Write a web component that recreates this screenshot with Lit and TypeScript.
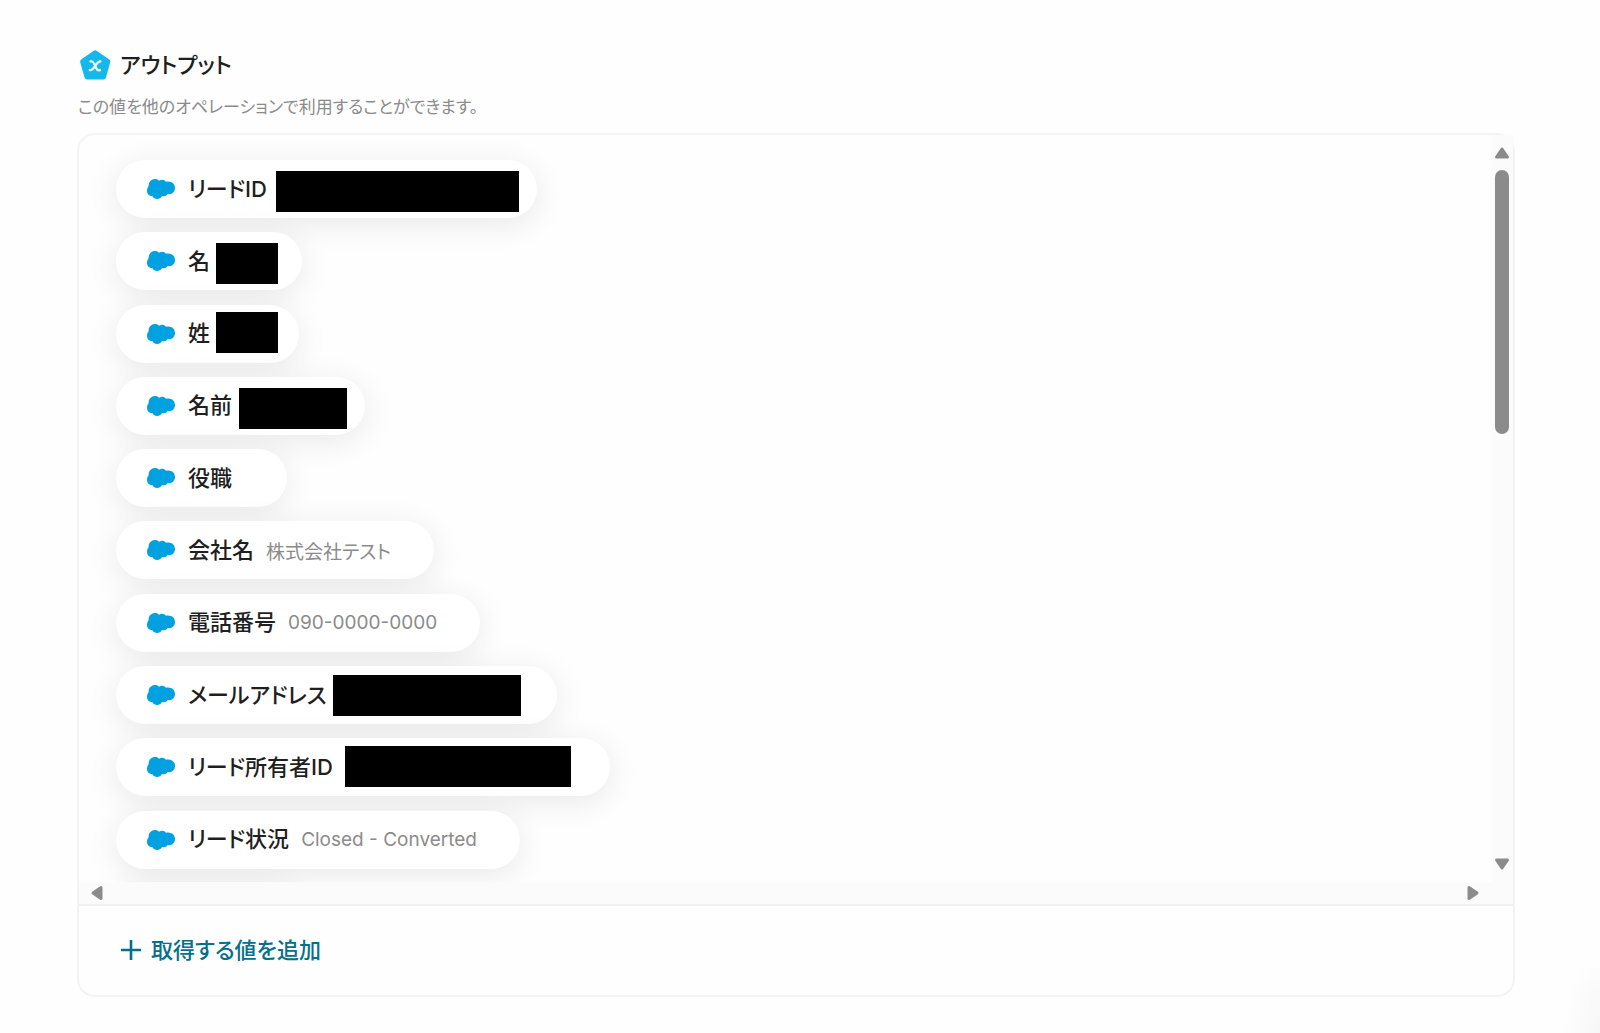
import { LitElement, html, css, svg, nothing } from "lit";
import { customElement, property } from "lit/decorators.js";
import { styleMap } from "lit/directives/style-map.js";

interface Mask {
  slot: number;
  left: number;
  top: number;
  width: number;
}

interface OutputField {
  label: string;
  value?: string;
  mask?: Mask;
}

const FIELDS: OutputField[] = [
  { label: "リードID", mask: { slot: 215, left: -3, top: 11, width: 243 } },
  { label: "名", mask: { slot: 37, left: -6, top: 11, width: 62 } },
  { label: "姓", mask: { slot: 34, left: -6, top: 7, width: 62 } },
  { label: "名前", mask: { slot: 78, left: -5, top: 11, width: 108 } },
  { label: "役職", value: "" },
  { label: "会社名", value: "株式会社テスト" },
  { label: "電話番号", value: "090-0000-0000" },
  { label: "メールアドレス", mask: { slot: 175, left: -6, top: 9, width: 188 } },
  { label: "リード所有者ID", mask: { slot: 222, left: 0, top: 8, width: 226 } },
  { label: "リード状況", value: "Closed - Converted" },
];

@customElement("output-pill")
export class OutputPill extends LitElement {
  @property({ attribute: false }) field!: OutputField;

  static styles = css`
    :host {
      position: relative;
      display: flex;
      align-items: center;
      box-sizing: border-box;
      width: fit-content;
      height: 58px;
      padding: 0 43px 0 31px;
      border-radius: 29px;
      background: #fff;
      box-shadow: 0 6px 32px rgba(0, 0, 0, 0.09);
      white-space: nowrap;
    }
    .cloud {
      flex: none;
      width: 28px;
      height: 20px;
      margin-right: 13px;
      fill: #00a1e0;
    }
    .label {
      padding-bottom: 1px;
      font-size: 22px;
      line-height: 32px;
      font-weight: 500;
      color: #1f1f1f;
    }
    .value {
      margin-left: 12px;
      font-size: 19px;
      color: #8b8b8b;
    }
    .slot {
      position: relative;
      align-self: stretch;
    }
    .mask {
      position: absolute;
      height: 41px;
      background: #000;
    }
  `;

  render() {
    const { label, value, mask } = this.field;
    return html`
      <svg class="cloud" viewBox="0 0 84 60" aria-hidden="true">
        <path
          d="M5 22 C4 9 13 0 24 0 C30 0 33 2 36 5 C44 0 53 2 57 8 C73 5 84 14 84 27 C84 40 73 48 62 45 C58 51 52 53 45 51 C41 58 36 60 31 60 C23 60 18 56 16 51 C6 52 0 44 0 36 C0 30 2 25 5 22 Z"
        />
      </svg>
      <span class="label">${label}</span>
      ${mask
        ? html`<span class="value slot" style=${styleMap({ width: `${mask.slot}px` })}>
            <span
              class="mask"
              style=${styleMap({ left: `${mask.left}px`, top: `${mask.top}px`, width: `${mask.width}px` })}
            ></span>
          </span>`
        : value !== undefined
          ? html`<span class="value">${value}</span>`
          : nothing}
    `;
  }
}

const arrow = (turn: number) => html`
  <svg class="arrow" viewBox="0 0 16 16" aria-hidden="true">
    ${svg`<path transform="rotate(${turn} 8 8)" d="M8 4 L13.500 12 H2.500 Z" />`}
  </svg>
`;

@customElement("app-root")
export class AppRoot extends LitElement {
  static styles = css`
    :host {
      display: flex;
      flex-direction: column;
      box-sizing: border-box;
      height: 100vh;
      padding: 48px 85px 36px 77px;
      background: radial-gradient(ellipse 36px 76px at 100% 100%, #f6f6f6 0, #fefefe 100%);
      background-color: #fefefe;
      font-family: Inter, "Noto Sans CJK JP", sans-serif;
      font-feature-settings: "palt";
    }
    .heading {
      display: flex;
      align-items: center;
      gap: 9px;
      height: 34px;
      padding-left: 2px;
    }
    .badge {
      width: 32px;
      height: 32px;
    }
    .title {
      margin: 0;
      font-size: 22px;
      line-height: 32px;
      font-weight: 500;
      color: #1f1f1f;
    }
    .note {
      margin: 13px 0;
      padding-left: 1px;
      font-size: 17px;
      line-height: 25px;
      color: #8b8b8b;
    }
    .card {
      flex: 1;
      min-height: 0;
      display: flex;
      flex-direction: column;
      border: 2px solid #f3f3f3;
      border-radius: 18px;
    }
    .scroller {
      flex: 1;
      min-height: 0;
      display: grid;
      grid-template: minmax(0, 1fr) 22px / minmax(0, 1fr) 22px;
      border-bottom: 2px solid #f1f1f1;
    }
    .viewport {
      overflow: hidden;
      padding: 25px 37px 0;
      border-top-left-radius: 16px;
    }
    .list {
      display: flex;
      flex-direction: column;
      justify-content: space-between;
      height: 781px;
      margin: 0;
      padding: 0;
      list-style: none;
    }
    .next {
      width: 184px;
      height: 58px;
      border-radius: 29px;
      background: #fff;
      box-shadow: 0 6px 32px rgba(0, 0, 0, 0.09);
    }
    .track {
      display: flex;
      align-items: center;
      background: #fbfbfb;
    }
    .vertical {
      flex-direction: column;
      padding: 10px 0;
    }
    .horizontal {
      justify-content: space-between;
      padding: 0 10px;
    }
    .corner {
      background: #fbfbfb;
    }
    .arrow {
      flex: none;
      width: 16px;
      height: 16px;
      fill: #8b8b8b;
      stroke: #8b8b8b;
      stroke-width: 3;
      stroke-linejoin: round;
    }
    .rail {
      flex: 1;
      padding-top: 9px;
    }
    .thumb {
      width: 14px;
      height: 264px;
      border-radius: 7px;
      background: #8b8b8b;
    }
    .footer {
      display: flex;
      align-items: center;
      height: 89px;
      padding: 0 41px;
    }
    .add {
      display: flex;
      align-items: center;
      gap: 9px;
      padding: 0 0 2px;
      border: 0;
      background: none;
      font: inherit;
      font-size: 22px;
      line-height: 32px;
      font-weight: 500;
      font-feature-settings: inherit;
      color: #066f89;
      cursor: pointer;
    }
    .plus {
      width: 22px;
      height: 22px;
      stroke: currentColor;
      stroke-width: 2.6;
    }
  `;

  render() {
    return html`
      <header class="heading">
        <svg class="badge" viewBox="0 0 32 32" aria-hidden="true">
          <path
            d="M16.200 3.800 L28.800 12.600 L24.500 28 H8 L3.600 12.600 Z"
            fill="#12b9ea" stroke="#12b9ea" stroke-width="5" stroke-linejoin="round"
          />
          <path
            d="M11.500 12.300 C14.500 11.800 14.800 14 16.200 16.800 C17.600 20 18 21.800 21 21.200 M21.400 12.300 C19 12.300 17.800 14.600 16.200 16.800 C14.500 19.400 13.200 21.300 10.800 21.200"
            fill="none" stroke="#fff" stroke-width="2.200" stroke-linecap="round"
          />
        </svg>
        <h1 class="title">アウトプット</h1>
      </header>
      <p class="note">この値を他のオペレーションで利用することができます。</p>
      <section class="card">
        <div class="scroller">
          <div class="viewport">
            <ul class="list">
              ${FIELDS.map((field) => html`<li><output-pill .field=${field}></output-pill></li>`)}
              <li class="next" aria-hidden="true"></li>
            </ul>
          </div>
          <div class="track vertical">
            ${arrow(0)}
            <div class="rail"><div class="thumb"></div></div>
            ${arrow(180)}
          </div>
          <div class="track horizontal">${arrow(270)}${arrow(90)}</div>
          <div class="corner"></div>
        </div>
        <div class="footer">
          <button class="add" type="button">
            <svg class="plus" viewBox="0 0 22 22" aria-hidden="true">
              <path d="M11 1V21M1 11H21" />
            </svg>
            取得する値を追加
          </button>
        </div>
      </section>
    `;
  }
}
